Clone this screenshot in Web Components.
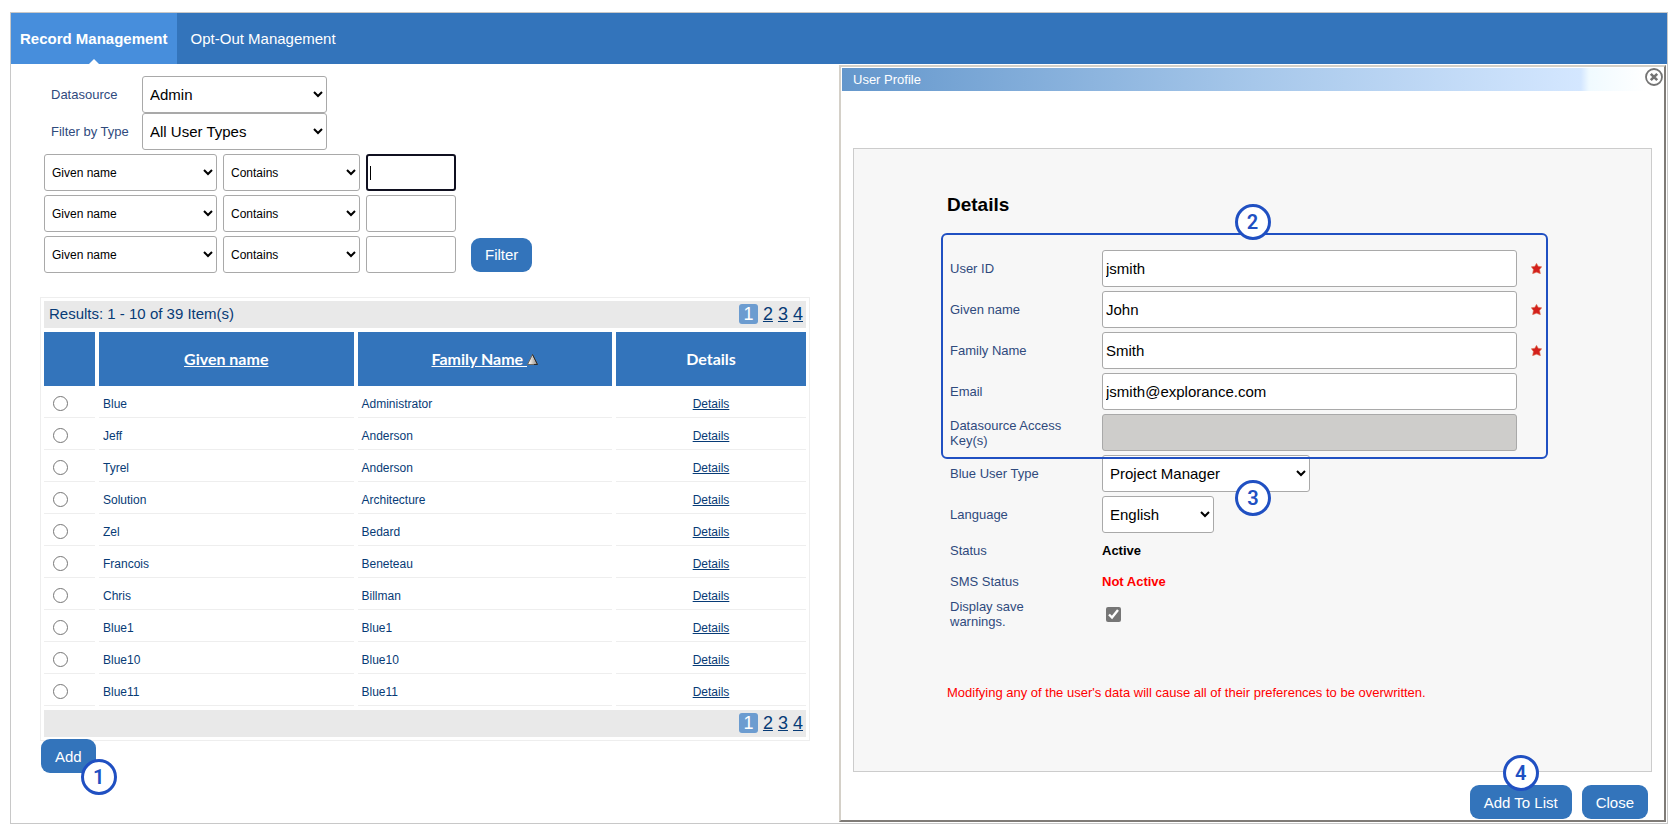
<!DOCTYPE html>
<html lang="en">
<head>
<meta charset="utf-8">
<title>Record Management</title>
<style>
  body {
    margin: 12px 4px 6px 10px;
    background: #fff;
    font-family: "Liberation Sans", Arial, sans-serif;
    font-size: 13px;
    color: #2f4a7d;
    --blue: #3374bb;
    --navy: #073b76;
    --mark: #2050c2;
    --line: #a9a9a9;
  }
</style>
</head>
<body>
<record-app></record-app>

<script>
// Common look of the form controls, used inside several shadow roots
const controlStyles = `
  *, *::before, *::after { box-sizing: border-box; }
  select, input[type="text"] {
    height: 37px;
    margin: 0;
    border: 1px solid var(--line);
    border-radius: 3px;
    background-color: #fff;
    color: #000;
    font-family: inherit;
    font-size: 15px;
  }
  select { padding: 0 4px 0 3px; }
  input[type="text"] { padding: 0 3px; }
  input[type="text"]:disabled { background-color: #cecdcb; }
`;

class StepBadge extends HTMLElement {
  constructor() {
    super();
    this.attachShadow({ mode: 'open' });
    this.shadowRoot.innerHTML = `
      <style>
        :host {
          position: absolute;
          z-index: 2;
          box-sizing: border-box;
          width: 36px;
          height: 36px;
          border: 3px solid var(--mark);
          border-radius: 50%;
          background: #fff;
          color: var(--mark);
          font: 600 20px/30px Roboto, sans-serif;
          text-align: center;
        }
      </style>
      <slot></slot>
    `;
  }
}
customElements.define('step-badge', StepBadge);

class ActionButton extends HTMLElement {
  constructor() {
    super();
    this.attachShadow({ mode: 'open' });
    this.shadowRoot.innerHTML = `
      <style>
        :host { display: inline-block; position: relative; }
        button {
          display: block;
          height: 34px;
          padding: 0 14px;
          border: 0;
          border-radius: 9px;
          background: var(--blue);
          color: #fff;
          font-family: inherit;
          font-size: 15px;
          cursor: pointer;
        }
      </style>
      <button type="button"><slot></slot></button>
      <slot name="badge"></slot>
    `;
  }
}
customElements.define('action-button', ActionButton);

class TabBar extends HTMLElement {
  constructor() {
    super();
    this.attachShadow({ mode: 'open' });
    this.shadowRoot.innerHTML = `
      <style>
        :host { display: block; background: var(--blue); }
        nav { display: flex; }
        a {
          position: relative;
          padding: 0 14px;
          color: #fff;
          font-size: 15px;
          line-height: 51px;
          text-decoration: none;
        }
        a.active {
          padding: 0 9px;
          background: #478edc;
          font-weight: bold;
        }
        a.active::after {
          content: "";
          position: absolute;
          left: 50%;
          bottom: 0;
          margin-left: -5px;
          border: 5px solid transparent;
          border-top: 0;
          border-bottom-color: #fff;
        }
      </style>
      <nav>
        <a class="active" href="#records">Record Management</a>
        <a href="#optout">Opt-Out Management</a>
      </nav>
    `;
  }
}
customElements.define('tab-bar', TabBar);

class RecordFilters extends HTMLElement {
  constructor() {
    super();
    this.attachShadow({ mode: 'open' });
    const row = (n) => `
      <div class="row">
        <select class="name" aria-label="Field ${n}"><option>Given name</option></select>
        <select class="op" aria-label="Operator ${n}"><option>Contains</option></select>
        <input type="text" class="${n === 1 ? 'current' : ''}" aria-label="Value ${n}">
        ${n === 3 ? '<action-button>Filter</action-button>' : ''}
      </div>`;
    this.shadowRoot.innerHTML = `
      <style>
        ${controlStyles}
        :host { display: block; }
        .main { display: grid; grid-template-columns: 91px 185px; align-items: center; padding-left: 11px; }
        .rows { display: grid; gap: 4px; padding: 4px 0 0 4px; }
        .row { display: flex; align-items: center; gap: 6px; }
        .row select { font-size: 12px; }
        .name { width: 173px; }
        .op { width: 137px; }
        .row input { width: 90px; }
        .row input.current {
          border: 2px solid #101020;
          background: linear-gradient(#000, #000) 2px center / 1px 14px no-repeat #fff;
        }
        action-button { margin-left: 9px; }
      </style>
      <div class="main">
        <label for="source">Datasource</label>
        <select id="source"><option>Admin</option></select>
        <label for="type">Filter by Type</label>
        <select id="type"><option>All User Types</option></select>
      </div>
      <div class="rows">${[1, 2, 3].map(row).join('')}</div>
    `;
  }
}
customElements.define('record-filters', RecordFilters);

class PageBar extends HTMLElement {
  constructor() {
    super();
    this.attachShadow({ mode: 'open' });
    this.shadowRoot.innerHTML = `
      <style>
        :host {
          display: flex;
          align-items: center;
          justify-content: space-between;
          height: 25px;
          padding: 0 3px 2px 5px;
          background: #e9e9e9;
          color: var(--navy);
          font-size: 15px;
        }
        .pages { display: flex; gap: 5px; font-size: 18px; line-height: 20px; }
        .pages b {
          width: 19px;
          border-radius: 3px;
          background: #6c9cd0;
          color: #fff;
          font-weight: normal;
          text-align: center;
        }
        a { color: inherit; }
      </style>
      <span><slot></slot></span>
      <div class="pages"><b>1</b><a href="#2">2</a><a href="#3">3</a><a href="#4">4</a></div>
    `;
  }
}
customElements.define('page-bar', PageBar);

class ResultTable extends HTMLElement {
  constructor() {
    super();
    this.attachShadow({ mode: 'open' });
    const people = [
      ['Blue', 'Administrator'],
      ['Jeff', 'Anderson'],
      ['Tyrel', 'Anderson'],
      ['Solution', 'Architecture'],
      ['Zel', 'Bedard'],
      ['Francois', 'Beneteau'],
      ['Chris', 'Billman'],
      ['Blue1', 'Blue1'],
      ['Blue10', 'Blue10'],
      ['Blue11', 'Blue11'],
    ];
    this.shadowRoot.innerHTML = `
      <style>
        :host { display: block; padding: 3px; border: 1px solid #eee; }
        table {
          width: calc(100% + 8px);
          margin: 0 -4px;
          border-collapse: separate;
          border-spacing: 4px;
          table-layout: fixed;
          color: var(--navy);
          font-size: 12px;
        }
        .pick { width: 51px; }
        .more { width: 190px; }
        th {
          height: 54px;
          padding: 0;
          background: var(--blue);
          color: #fff;
          font: 700 16px/20px Lato, sans-serif;
        }
        td {
          box-sizing: border-box;
          height: 28px;
          padding: 0 4px;
          border-bottom: 1px solid #eee;
        }
        td:first-child { padding-left: 9px; }
        td:last-child { text-align: center; }
        input { display: block; width: 15px; height: 15px; margin: 0; }
        a { color: inherit; }
        svg { width: 11px; height: 11px; }
      </style>
      <page-bar>Results: 1 - 10 of 39 Item(s)</page-bar>
      <table>
        <colgroup><col class="pick"><col><col><col class="more"></colgroup>
        <thead>
          <tr>
            <th></th>
            <th><a href="#given">Given name</a></th>
            <th><a href="#family">Family Name <svg viewBox="0 0 11 11">
              <defs><linearGradient id="g"><stop offset="0.2" stop-color="#f4f0ea"/><stop offset="1" stop-color="#8d8781"/></linearGradient></defs>
              <path d="M5.500 0.500L10.500 10.500H0.500Z" fill="url(#g)" stroke="#6d6862"/>
              <path d="M5.500 0.500L10.500 10.500H7" fill="none" stroke="#2b2b2b"/>
            </svg></a></th>
            <th>Details</th>
          </tr>
        </thead>
        <tbody>
          ${people.map(([given, family], i) => `
            <tr>
              <td><input type="radio" name="person" aria-label="Select ${given} ${family}"></td>
              <td>${given}</td>
              <td>${family}</td>
              <td><a href="#details-${i}">Details</a></td>
            </tr>`).join('')}
        </tbody>
      </table>
      <page-bar></page-bar>
    `;
  }
}
customElements.define('result-table', ResultTable);

// One line of the profile form: label, control, mark of a required field
class ProfileField extends HTMLElement {
  constructor() {
    super();
    this.attachShadow({ mode: 'open' });
  }

  connectedCallback() {
    const label = this.getAttribute('label');
    const value = this.getAttribute('value') || '';
    const type = this.getAttribute('type') || 'text';
    const star = this.hasAttribute('required') ? `
      <svg viewBox="0 0 11 11"><path fill="#d4201c" stroke="#dc7a5c" stroke-width="0.600"
        d="M5.500 0.300L7.200 3.300L10.700 3.700L8.600 6.600L9.400 10.700L5.500 9.200L1.600 10.700L2.400 6.600L0.300 3.700L3.800 3.300Z"/></svg>` : '';

    let control = `<input id="c" type="text" value="${value}" ${this.hasAttribute('disabled') ? 'disabled' : ''}>`;
    if (type === 'select') {
      control = `<span class="hold"><select id="c"><option>${value}</option></select><slot name="badge"></slot></span>`;
    } else if (type === 'check') {
      control = '<input id="c" type="checkbox" checked>';
    } else if (type === 'static') {
      control = `<output id="c">${value}</output>`;
    }

    this.shadowRoot.innerHTML = `
      <style>
        ${controlStyles}
        :host {
          display: grid;
          grid-template-columns: 120px minmax(0, 1fr) 11px;
          align-items: center;
          padding: 0 6px 0 9px;
          line-height: 15px;
        }
        .control { margin: 0 14px 0 32px; }
        .control > input[type="text"] { display: block; width: 100%; }
        .hold { display: inline-block; position: relative; vertical-align: top; }
        select { display: block; width: var(--select-width, 208px); }
        input[type="checkbox"] {
          display: block;
          width: 15px;
          height: 15px;
          margin: 0 4px;
          accent-color: #767676;
        }
        output { display: block; color: var(--tone, #000); font-weight: bold; line-height: 27px; }
        svg { display: block; width: 11px; height: 11px; }
      </style>
      <label for="c">${label}</label>
      <div class="control">${control}</div>
      ${star}
    `;
  }
}
customElements.define('profile-field', ProfileField);

class ProfileDialog extends HTMLElement {
  constructor() {
    super();
    this.attachShadow({ mode: 'open' });
    this.shadowRoot.innerHTML = `
      <style>
        *, *::before, *::after { box-sizing: border-box; }
        :host {
          display: block;
          box-sizing: border-box;
          padding: 1px;
          border: 2px solid;
          border-color: #d4d0c8 #7f7b77 #7f7b77 #d4d0c8;
          background: #fff;
        }
        .title {
          display: flex;
          align-items: flex-start;
          justify-content: space-between;
          height: 23px;
          padding-left: 11px;
          background: linear-gradient(to right, #6497cc, #a6c7ea 50%, #d4e7ff 90%, #f0faff 91%, #fff 98%);
          color: #fff;
          line-height: 23px;
        }
        .title button { width: 18px; height: 18px; padding: 0; border: 0; background: none; }
        .title svg { display: block; width: 18px; height: 18px; }
        .panel {
          margin: 57px 11px 0;
          padding: 44px 103px 71px 87px;
          border: 1px solid #ccc;
          background: #f7f7f7;
        }
        h2 { margin: 0 0 33px; padding-left: 6px; color: #000; font-size: 19px; line-height: 24px; }
        .group, .rest { display: grid; gap: 4px; }
        .group { position: relative; margin-bottom: 4px; }
        /* highlight frame, lies over the fields */
        .group::after {
          content: "";
          position: absolute;
          inset: -17px 0 -8px;
          z-index: 1;
          border: 2px solid var(--mark);
          border-radius: 6px;
          pointer-events: none;
        }
        .group step-badge { top: -46px; left: calc(50% - 10px); }
        .rest step-badge { right: 39px; bottom: -24px; }
        .language { --select-width: 112px; }
        .off { --tone: #f00; }
        .warning { margin: 56px 0 0; padding-left: 6px; color: #f00; line-height: 15px; }
        footer { display: flex; justify-content: flex-end; gap: 10px; padding: 13px 15px 0; }
        footer step-badge { top: -30px; left: calc(50% - 18px); }
      </style>
      <div class="title">
        <span>User Profile</span>
        <button type="button" aria-label="Close dialog">
          <svg viewBox="0 0 18 18" fill="none" stroke="#747474">
            <circle cx="9" cy="9" r="8" fill="#fff" stroke-width="1.800"/>
            <path d="M5.800 5.800L12.200 12.200M12.200 5.800L5.800 12.200" stroke-width="2.600"/>
          </svg>
        </button>
      </div>
      <div class="panel">
        <h2>Details</h2>
        <div class="group">
          <profile-field label="User ID" value="jsmith" required></profile-field>
          <profile-field label="Given name" value="John" required></profile-field>
          <profile-field label="Family Name" value="Smith" required></profile-field>
          <profile-field label="Email" value="jsmith@explorance.com"></profile-field>
          <profile-field label="Datasource Access Key(s)" disabled></profile-field>
          <step-badge>2</step-badge>
        </div>
        <div class="rest">
          <profile-field label="Blue User Type" type="select" value="Project Manager">
            <step-badge slot="badge">3</step-badge>
          </profile-field>
          <profile-field class="language" label="Language" type="select" value="English"></profile-field>
          <profile-field label="Status" type="static" value="Active"></profile-field>
          <profile-field class="off" label="SMS Status" type="static" value="Not Active"></profile-field>
          <profile-field label="Display save warnings." type="check"></profile-field>
        </div>
        <p class="warning">Modifying any of the user's data will cause all of their preferences to be overwritten.</p>
      </div>
      <footer>
        <action-button>Add To List<step-badge slot="badge">4</step-badge></action-button>
        <action-button>Close</action-button>
      </footer>
    `;
  }
}
customElements.define('profile-dialog', ProfileDialog);

class RecordApp extends HTMLElement {
  constructor() {
    super();
    this.attachShadow({ mode: 'open' });
    this.shadowRoot.innerHTML = `
      <style>
        :host { display: block; border: 1px solid #c8c8c8; }
        main { display: grid; grid-template-columns: minmax(0, 1fr) minmax(0, 1fr); }
        section { padding: 12px 29px; }
        result-table { margin-top: 24px; }
        .add { margin: -2px 1px 0; }
        .add step-badge { right: -21px; bottom: -22px; }
        profile-dialog { margin: 1px 1px 1px 0; }
      </style>
      <tab-bar></tab-bar>
      <main>
        <section>
          <record-filters></record-filters>
          <result-table></result-table>
          <action-button class="add">Add<step-badge slot="badge">1</step-badge></action-button>
        </section>
        <profile-dialog></profile-dialog>
      </main>
    `;
  }
}
customElements.define('record-app', RecordApp);
</script>
</body>
</html>
